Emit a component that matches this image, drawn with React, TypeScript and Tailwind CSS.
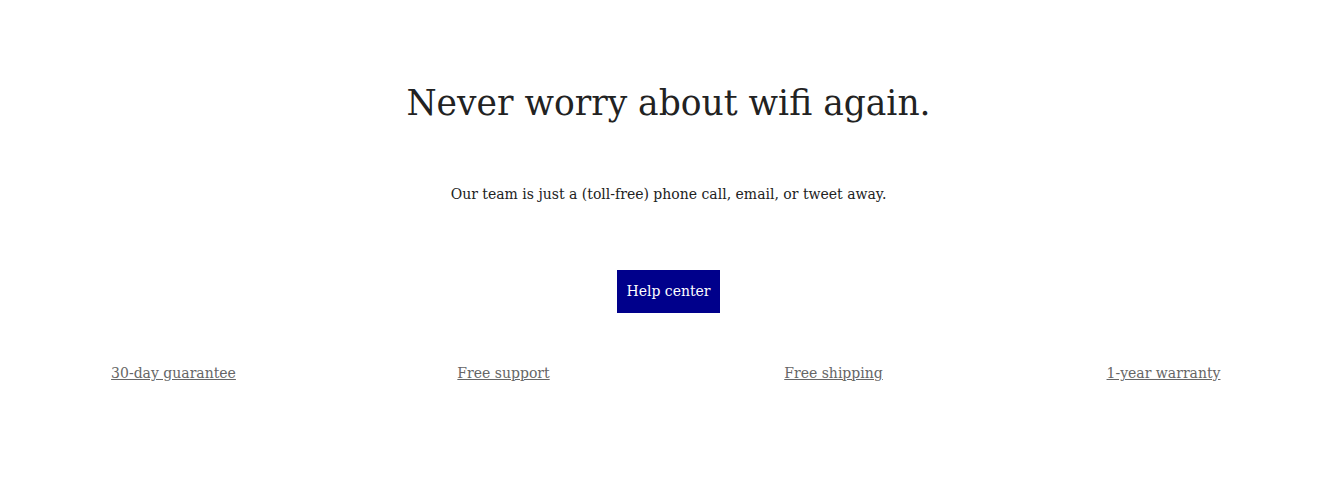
import * as React from "react";

const links = ["30-day guarantee", "Free support", "Free shipping", "1-year warranty"];

export default function App() {
  return (
    <main className="flex h-[482px] w-full flex-col items-center bg-white pl-[4px] font-['DejaVu_Serif',serif] text-[#222222]">
      <h1 className="mt-[78px] text-[34.5px] leading-[50px]">Never worry about wifi again.</h1>
      <p className="mt-[54px] text-[14px] leading-[24px]">
        Our team is just a (toll-free) phone call, email, or tweet away.
      </p>
      <a
        href="#"
        className="mt-[64px] flex h-[43px] w-[103px] items-center justify-center bg-[#00008b] text-[14px] text-white"
      >
        Help center
      </a>
      <div className="mt-[48px] grid w-[1320px] grid-cols-4">
        {links.map((l) => (
          <div key={l} className="flex justify-center">
            <a href="#" className="text-[14px] leading-[24px] text-[#666666] underline">
              {l}
            </a>
          </div>
        ))}
      </div>
    </main>
  );
}
